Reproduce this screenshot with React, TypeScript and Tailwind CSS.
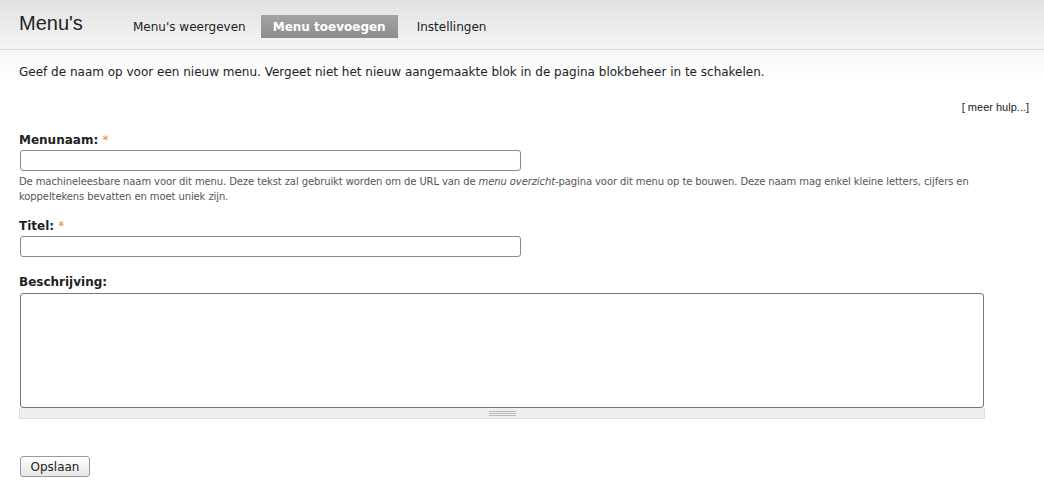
export default function App() {
    return (
        <div className="min-h-[481px] w-full bg-white text-[#222] font-['DejaVu_Sans',sans-serif]">
            {/* Header with title and tabs */}
            <div className="h-[50px] border-b border-[#dedede] bg-gradient-to-b from-[#e2e2e2] to-[#f4f4f4] flex items-start px-[19px]">
                <h1 className="mt-[11px] font-['Liberation_Sans',Arial,sans-serif] text-[20px] leading-[24px] text-[#222] w-[99px]">Menu's</h1>
                <ul className="flex items-center mt-[15px] text-[12px] h-[23px]">
                    <li className="px-[15px] text-[#222]">Menu's weergeven</li>
                    <li className="h-[23px] px-[12px] flex items-center font-bold text-white bg-gradient-to-b from-[#a4a4a4] to-[#8c8c8c]">Menu toevoegen</li>
                    <li className="px-[19px] text-[#222]">Instellingen</li>
                </ul>
            </div>

            {/* Help text */}
            <div className="h-[29px] bg-gradient-to-b from-[#f6f6f6] to-white px-[19px] pt-[15px]">
                <p className="text-[12px] leading-[15px]">
                    Geef de naam op voor een nieuw menu. Vergeet niet het nieuw aangemaakte blok in de pagina blokbeheer in te schakelen.
                </p>
            </div>

            <div className="flex justify-end pr-[15px] pt-[22px]">
                <span className="font-['Liberation_Sans',Arial,sans-serif] text-[11px] leading-[13px] text-[#222]">[ meer hulp...]</span>
            </div>

            {/* Form */}
            <form className="px-[19px] pt-[19px]" onSubmit={e => e.preventDefault()}>
                <div>
                    <label className="block text-[12px] leading-[15px] font-bold">
                        Menunaam: <span className="text-[#e09010] font-normal">*</span>
                    </label>
                    <input
                        type="text"
                        className="mt-[2px] ml-px block w-[501px] h-[21px] rounded-[3px] border border-[#8a8a8a] bg-white outline-none"
                    />
                    <p className="mt-[3px] text-[10px] leading-[15px] text-[#555] tracking-[-0.1px] w-[980px]">
                        De machineleesbare naam voor dit menu. Deze tekst zal gebruikt worden om de URL van de <em>menu overzicht</em>-pagina voor dit menu op te bouwen. Deze naam mag enkel kleine letters, cijfers en koppeltekens bevatten en moet uniek zijn.
                    </p>
                </div>

                <div className="mt-[15px]">
                    <label className="block text-[12px] leading-[15px] font-bold">
                        Titel: <span className="text-[#e09010] font-normal">*</span>
                    </label>
                    <input
                        type="text"
                        className="mt-[2px] ml-px block w-[501px] h-[21px] rounded-[3px] border border-[#8a8a8a] bg-white outline-none"
                    />
                </div>

                <div className="mt-[18px]">
                    <label className="block text-[12px] leading-[15px] font-bold">Beschrijving:</label>
                    <div className="mt-[3px] w-[966px]">
                        <textarea className="ml-px block w-[964px] h-[115px] rounded-[3px] border border-[#777] bg-white outline-none resize-none" />
                        <div className="h-[11px] bg-[#eeeeee] border border-t-0 border-[#dddddd] flex items-center justify-center">
                            <div className="w-[27px] flex flex-col gap-[1px]">
                                <div className="h-px bg-[#bbb]" />
                                <div className="h-px bg-[#bbb]" />
                                <div className="h-px bg-[#bbb]" />
                            </div>
                        </div>
                    </div>
                </div>

                <button
                    type="submit"
                    className="mt-[37px] ml-px h-[21px] w-[70px] rounded-[3px] border border-[#999] bg-gradient-to-b from-white to-[#e6e6e6] text-[12px] text-[#222]"
                >
                    Opslaan
                </button>
            </form>
        </div>
    );
}
